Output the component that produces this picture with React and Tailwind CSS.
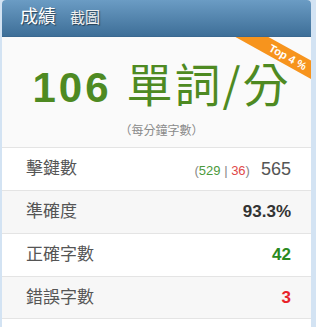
export default function App() {
  const cjk = { fontFamily: '"Liberation Sans", "Noto Sans CJK TC", sans-serif' };
  const cjkOnly = { fontFamily: '"Noto Sans CJK TC", sans-serif' };
  return (
    <div className="w-[316px] h-[327px] bg-[#d3e3f3] overflow-hidden pl-[2px]" style={cjk}>
      <div className="w-[309px] h-[327px] bg-white rounded-t-[4px] overflow-hidden">
        <div className="h-[37px] bg-gradient-to-b from-[#6b9cc4] to-[#3e6f98] flex items-end pb-[8px] px-[18px] gap-[14px] border-b border-[#3a6890]">
          <span className="text-[18px] leading-[22px] text-white [text-shadow:1px_1px_1px_rgba(0,0,0,0.5)]">成績</span>
          <span className="text-[15px] leading-[20px] text-[#f0f0f0] [text-shadow:1px_1px_1px_rgba(0,0,0,0.5)]">截圖</span>
        </div>
        <div className="relative h-[110px] bg-[#fafafa] overflow-hidden flex flex-col items-center pl-[10px]">
          <div className="absolute left-[216px] top-[12px] w-[140px] h-[16px] bg-[#f7941d] rotate-[29deg] flex items-center justify-center">
            <span className="text-white text-[11px] font-bold leading-none">Top 4 %</span>
          </div>
          <div className="mt-[22px] leading-[46px] text-[#4e8a22] flex items-baseline">
            <span className="text-[42px] font-bold tracking-[3px]">106</span>
            <span className="text-[46px] ml-[15px] tracking-[2px]" style={cjkOnly}>單詞/分</span>
          </div>
          <div className="mt-[12px] text-[12px] leading-[16px] text-[#8a8a8a]">（每分鐘字數）</div>
        </div>
        <div className="h-[43px] border-t border-[#e4e4e4] bg-white flex items-center justify-between pl-[24px] pr-[20px]">
          <span className="text-[17px] text-[#555]">擊鍵數</span>
          <span className="flex items-baseline">
            <span className="text-[13px] text-[#888]">(<span className="text-[#4c9a3c]">529</span> | <span className="text-[#e04848]">36</span>)</span>
            <span className="text-[18px] text-[#555] ml-[11px]">565</span>
          </span>
        </div>
        <div className="h-[43px] border-t border-[#e4e4e4] bg-[#f7f7f7] flex items-center justify-between pl-[24px] pr-[20px]">
          <span className="text-[17px] text-[#555]">準確度</span>
          <span className="text-[17px] font-bold text-[#333]">93.3%</span>
        </div>
        <div className="h-[43px] border-t border-[#e4e4e4] bg-white flex items-center justify-between pl-[24px] pr-[20px]">
          <span className="text-[17px] text-[#555]">正確字數</span>
          <span className="text-[17px] font-bold text-[#2a8a1e]">42</span>
        </div>
        <div className="h-[43px] border-t border-b border-[#e4e4e4] bg-[#f7f7f7] flex items-center justify-between pl-[24px] pr-[20px]">
          <span className="text-[17px] text-[#555]">錯誤字數</span>
          <span className="text-[17px] font-bold text-[#e8232a]">3</span>
        </div>
      </div>
    </div>
  );
}
